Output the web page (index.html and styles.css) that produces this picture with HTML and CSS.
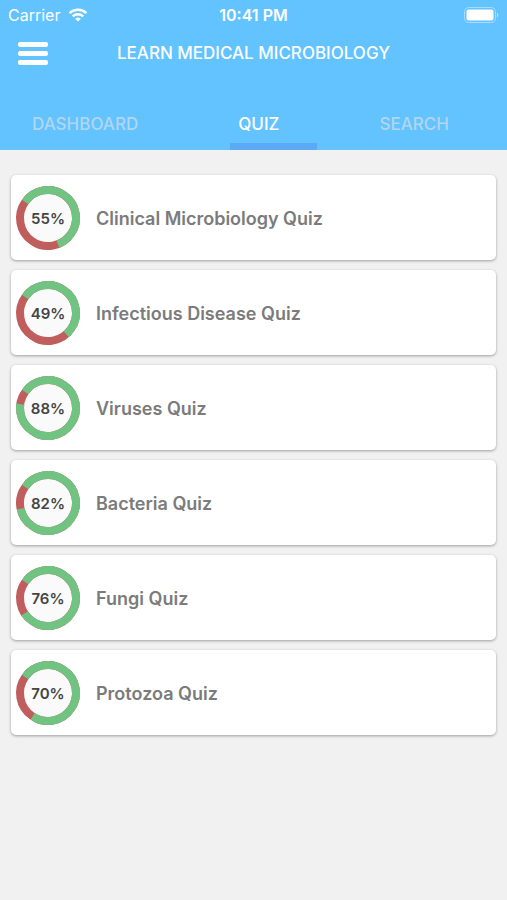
FILE: index.html
```
<!DOCTYPE html>
<html lang="en">
<head>
    <meta charset="UTF-8">
    <meta name="viewport" content="width=device-width, initial-scale=1.0">
    <title>Learn Medical Microbiology</title>
    <link rel="stylesheet" href="styles.css">
</head>
<body>
    <header class="header">
        <div class="status-bar">
            <div class="carrier">
                <span>Carrier</span>
                <svg class="wifi" viewBox="0 0 20 14" aria-hidden="true">
                    <path d="M1.6 5.2a12 12 0 0 1 16.8 0" />
                    <path d="M4.7 8.4a7.6 7.6 0 0 1 10.6 0" />
                    <path class="wifi-dot" d="M10 13.6L7.2 10.9a4 4 0 0 1 5.6 0z" />
                </svg>
            </div>
            <span class="time">10:41 PM</span>
            <svg class="battery" viewBox="0 0 36 16" aria-hidden="true">
                <rect class="battery-case" x="1.5" y="0.5" width="31" height="15" rx="4" />
                <rect class="battery-level" x="3.5" y="2.5" width="27" height="11" rx="2" />
                <path class="battery-tip" d="M34 5.5a3 3 0 0 1 0 5z" />
            </svg>
        </div>

        <div class="title-bar">
            <button class="menu-button" type="button" aria-label="Menu">
                <span></span>
                <span></span>
                <span></span>
            </button>
            <h1>LEARN MEDICAL MICROBIOLOGY</h1>
        </div>

        <nav class="tabs">
            <a href="#dashboard">DASHBOARD</a>
            <a href="#quiz" class="active">QUIZ</a>
            <a href="#search">SEARCH</a>
        </nav>
    </header>

    <main class="quiz-list">
        <a class="card" href="#clinical">
            <span class="score">
                <svg class="ring" viewBox="0 0 64 64" aria-hidden="true">
                    <circle class="ring-back" cx="32" cy="32" r="28" />
                    <circle class="ring-fill" cx="32" cy="32" r="28" pathLength="100" stroke-dasharray="59.5 100" />
                </svg>
                <span class="percent">55%</span>
            </span>
            <span class="name">Clinical Microbiology Quiz</span>
        </a>
        <a class="card" href="#infectious">
            <span class="score">
                <svg class="ring" viewBox="0 0 64 64" aria-hidden="true">
                    <circle class="ring-back" cx="32" cy="32" r="28" />
                    <circle class="ring-fill" cx="32" cy="32" r="28" pathLength="100" stroke-dasharray="54 100" />
                </svg>
                <span class="percent">49%</span>
            </span>
            <span class="name">Infectious Disease Quiz</span>
        </a>
        <a class="card" href="#viruses">
            <span class="score">
                <svg class="ring" viewBox="0 0 64 64" aria-hidden="true">
                    <circle class="ring-back" cx="32" cy="32" r="28" />
                    <circle class="ring-fill" cx="32" cy="32" r="28" pathLength="100" stroke-dasharray="92.5 100" />
                </svg>
                <span class="percent">88%</span>
            </span>
            <span class="name">Viruses Quiz</span>
        </a>
        <a class="card" href="#bacteria">
            <span class="score">
                <svg class="ring" viewBox="0 0 64 64" aria-hidden="true">
                    <circle class="ring-back" cx="32" cy="32" r="28" />
                    <circle class="ring-fill" cx="32" cy="32" r="28" pathLength="100" stroke-dasharray="87 100" />
                </svg>
                <span class="percent">82%</span>
            </span>
            <span class="name">Bacteria Quiz</span>
        </a>
        <a class="card" href="#fungi">
            <span class="score">
                <svg class="ring" viewBox="0 0 64 64" aria-hidden="true">
                    <circle class="ring-back" cx="32" cy="32" r="28" />
                    <circle class="ring-fill" cx="32" cy="32" r="28" pathLength="100" stroke-dasharray="81 100" />
                </svg>
                <span class="percent">76%</span>
            </span>
            <span class="name">Fungi Quiz</span>
        </a>
        <a class="card" href="#protozoa">
            <span class="score">
                <svg class="ring" viewBox="0 0 64 64" aria-hidden="true">
                    <circle class="ring-back" cx="32" cy="32" r="28" />
                    <circle class="ring-fill" cx="32" cy="32" r="28" pathLength="100" stroke-dasharray="74.5 100" />
                </svg>
                <span class="percent">70%</span>
            </span>
            <span class="name">Protozoa Quiz</span>
        </a>
    </main>
</body>
</html>
```

FILE: styles.css
```
* {
    box-sizing: border-box;
}
body {
    margin: 0;
    font-family: Inter, "Liberation Sans", sans-serif;
    background-color: #f1f1f1;
}
a {
    text-decoration: none;
}
.header {
    background-color: #62c3ff;
    color: white;
}
.status-bar {
    display: grid;
    grid-template-columns: 1fr auto 1fr;
    align-items: center;
    height: 30px;
    padding: 0 8px;
    font-size: 16px;
}
.carrier {
    display: flex;
    align-items: center;
    gap: 8px;
}
.wifi {
    width: 20px;
    height: 14px;
    fill: none;
    stroke: white;
    stroke-width: 2.4;
}
.wifi .wifi-dot {
    fill: white;
    stroke: none;
}
.time {
    font-weight: 600;
}
.battery {
    justify-self: end;
    width: 36px;
    height: 16px;
}
.battery-case {
    fill: none;
    stroke: #a5dcff;
}
.battery-level {
    fill: white;
}
.battery-tip {
    fill: #b5e2ff;
}
.title-bar {
    display: grid;
    grid-template-columns: 30px 1fr 30px;
    align-items: center;
    height: 46px;
    padding: 0 18px;
}
.menu-button {
    display: flex;
    flex-direction: column;
    gap: 4px;
    padding: 0;
    border: none;
    background: none;
    cursor: pointer;
}
.menu-button span {
    width: 30px;
    height: 5px;
    border-radius: 2px;
    background-color: white;
}
h1 {
    margin: 0;
    font-size: 17px;
    font-weight: 500;
    text-align: center;
}
.tabs {
    display: flex;
    justify-content: space-between;
    margin-top: 22px;
    padding: 0 58px 0 32px;
}
.tabs a {
    position: relative;
    height: 52px;
    line-height: 52px;
    font-size: 17px;
    font-weight: 500;
    color: #b1d6ee;
}
.tabs .active {
    color: white;
}
.tabs .active::after {
    content: "";
    position: absolute;
    left: -8px;
    bottom: 0;
    width: 87px;
    height: 7px;
    background-color: #5caaf5;
}
.quiz-list {
    display: flex;
    flex-direction: column;
    gap: 10px;
    padding: 25px 11px;
}
.card {
    display: flex;
    align-items: center;
    gap: 16px;
    padding: 11px 5px 10px;
    border-radius: 5px;
    background-color: white;
    box-shadow: 0 1px 3px rgba(0, 0, 0, 0.35);
}
.score {
    display: grid;
    place-items: center;
}
.ring {
    grid-area: 1 / 1;
    width: 64px;
    height: 64px;
    transform: rotate(-145deg);
}
.ring-back {
    fill: #fafafa;
    stroke: #c05d5d;
    stroke-width: 8;
}
.ring-fill {
    fill: none;
    stroke: #71c381;
    stroke-width: 8;
}
.percent {
    grid-area: 1 / 1;
    z-index: 1;
    font-size: 15px;
    font-weight: 600;
    color: #444;
}
.name {
    font-size: 18px;
    font-weight: 600;
    color: #7b7b7b;
}
```
